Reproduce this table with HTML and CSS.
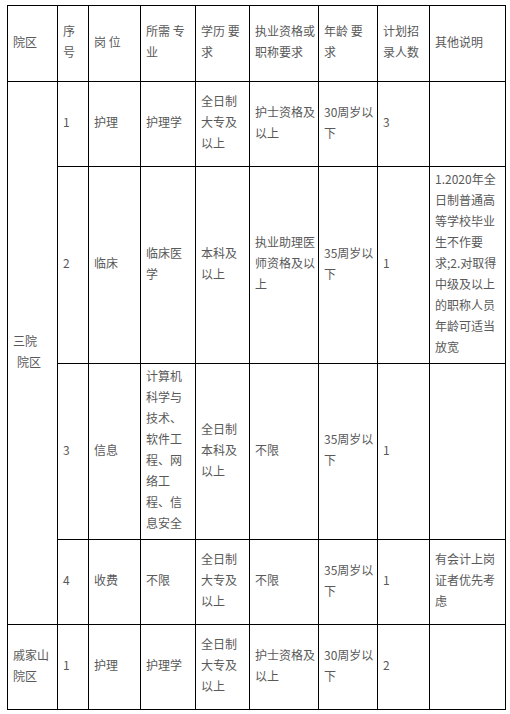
FILE: index.html
```html
<!DOCTYPE html>
<html lang="zh-CN">
<head>
<meta charset="utf-8">
<title>招聘岗位</title>
<link rel="stylesheet" href="styles.css">
</head>
<body>
<table class="jobs">
  <colgroup>
    <col class="c1"><col class="c2"><col class="c3"><col class="c4"><col class="c5">
    <col class="c6"><col class="c7"><col class="c8"><col class="c9">
  </colgroup>
  <tr class="r-head">
    <td>院区</td>
    <td>序号</td>
    <td>岗 位</td>
    <td>所需 专业</td>
    <td>学历 要求</td>
    <td>执业资格或职称要求</td>
    <td>年龄 要求</td>
    <td>计划招录人数</td>
    <td>其他说明</td>
  </tr>
  <tr class="r-85">
    <td rowspan="4">三院<br><span class="indent">院区</span></td>
    <td>1</td>
    <td>护理</td>
    <td>护理学</td>
    <td>全日制大专及以上</td>
    <td>护士资格及以上</td>
    <td>30周岁以下</td>
    <td>3</td>
    <td></td>
  </tr>
  <tr class="r-197">
    <td>2</td>
    <td>临床</td>
    <td>临床医学</td>
    <td>本科及以上</td>
    <td>执业助理医师资格及以上</td>
    <td>35周岁以下</td>
    <td>1</td>
    <td>1.2020年全日制普通高等学校毕业生不作要求;2.对取得中级及以上的职称人员年龄可适当放宽</td>
  </tr>
  <tr class="r-176">
    <td>3</td>
    <td>信息</td>
    <td>计算机科学与技术、软件工程、网络工程、信息安全</td>
    <td>全日制本科及以上</td>
    <td>不限</td>
    <td>35周岁以下</td>
    <td>1</td>
    <td></td>
  </tr>
  <tr class="r-85">
    <td>4</td>
    <td>收费</td>
    <td>不限</td>
    <td>全日制大专及以上</td>
    <td>不限</td>
    <td>35周岁以下</td>
    <td>1</td>
    <td>有会计上岗证者优先考虑</td>
  </tr>
  <tr class="r-85">
    <td>戚家山院区</td>
    <td>1</td>
    <td>护理</td>
    <td>护理学</td>
    <td>全日制大专及以上</td>
    <td>护士资格及以上</td>
    <td>30周岁以下</td>
    <td>2</td>
    <td></td>
  </tr>
</table>
</body>
</html>
```

FILE: styles.css
```css
html, body {
  margin: 0;
  padding: 0;
  background: #fff;
}

body {
  padding: 5px 0 0 7px;
  font-family: "Noto Sans CJK SC", "Microsoft YaHei", sans-serif;
  font-size: 12px;
  line-height: 21px;
  color: #595959;
}

.jobs {
  border-collapse: collapse;
  table-layout: fixed;
  width: 498px;
}

.jobs td {
  border: 1px solid #000;
  padding: 0 3px 5px 5px;
  vertical-align: middle;
  text-align: left;
  word-break: normal;
}

.indent {
  padding-left: 4px;
}

.c1 { width: 50px; }
.c2 { width: 31px; }
.c3 { width: 52px; }
.c4 { width: 55px; }
.c5 { width: 54px; }
.c6 { width: 69px; }
.c7 { width: 59px; }
.c8 { width: 52px; }
.c9 { width: 76px; }

.r-head { height: 76px; }
.r-85 { height: 85px; }
.r-197 { height: 197px; }
.r-176 { height: 176px; }
```
